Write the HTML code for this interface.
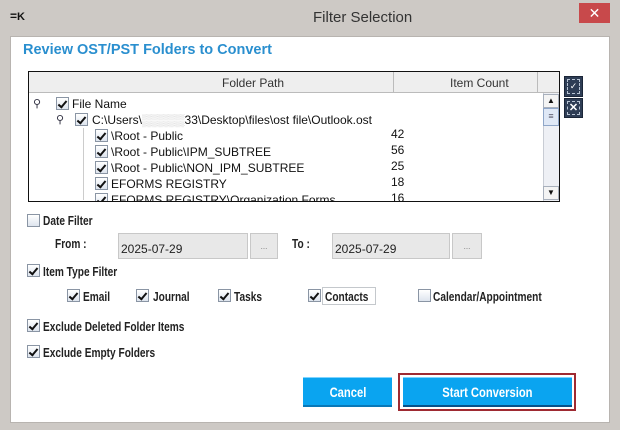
<!DOCTYPE html>
<html><head><style>
*{margin:0;padding:0;box-sizing:border-box}
body{width:620px;height:430px;background:#cdc9c5;font-family:"Liberation Sans",sans-serif;position:relative;overflow:hidden;font-size:12px;color:#111}
.a{position:absolute}
.cb{position:absolute;width:13px;height:13px;border:1px solid #8a95a4;background:linear-gradient(#fff,#dde4ee)}
.cb.c::after{content:"";position:absolute;left:3px;top:1px;width:3px;height:7px;border-right:2px solid #111;border-bottom:2px solid #111;transform:rotate(40deg)}
.t{position:absolute;white-space:nowrap}
.n{font-weight:bold;font-size:13px;color:#222;transform:scaleX(0.78);transform-origin:0 0}
.fld{position:absolute;background:#e8e8e8;border:1px solid #c8c8c8;font-size:12px;padding:8px 0 0 2px;color:#222}
.btn3{position:absolute;background:#e8e8e8;border:1px solid #c8c8c8;font-size:8px;text-align:center;line-height:30px;color:#777}
.bt{position:absolute;background:#0aa4f0;border-top:1px solid #7fd4ff;color:#fff;text-align:center}
.bt span{display:inline-block;font-weight:bold;font-size:14px;transform:scaleX(0.8);line-height:28px}
</style></head><body>
<div class="a" style="left:0;top:0;width:620px;height:37px;background:#cdc9c5"></div>
<div class="t" style="left:10px;top:9px;font-weight:bold;font-size:12px;color:#111">=<span style="font-size:11px">K</span></div>
<div class="t" style="left:313px;top:9px;font-size:15px;color:#333">Filter Selection</div>
<div class="a" style="left:579px;top:3px;width:31px;height:20px;background:#c8494b;color:#fff;text-align:center;font-size:14px;line-height:20px">✕</div>
<div class="a" style="left:10px;top:36px;width:600px;height:387px;background:#fff;border:1px solid #b8b4b0"></div>
<div class="t" style="left:23px;top:42px;font-weight:bold;font-size:14.5px;color:#2a8fcf">Review OST/PST Folders to Convert</div>
<div class="a" style="left:28px;top:71px;width:532px;height:131px;border:1px solid #111;background:#fff;overflow:hidden">
 <div class="a" style="left:0;top:0;width:530px;height:21px;background:#eeeeee;border-bottom:1px solid #bbb"></div>
 <div class="a" style="left:364px;top:0;width:1px;height:21px;background:#bbb"></div>
 <div class="a" style="left:508px;top:0;width:1px;height:21px;background:#bbb"></div>
 <div class="t" style="left:193px;top:4px;color:#333">Folder Path</div>
 <div class="t" style="left:421px;top:4px;color:#333">Item Count</div>
 <div class="a" style="left:514px;top:21px;width:16px;height:108px;background:#eef0f5;border-left:1px solid #c8ccd4"></div>
 <div class="a" style="left:514px;top:22px;width:16px;height:14px;border:1px solid #a8b0bc;background:#f4f4f4;font-size:8px;text-align:center;line-height:12px">▲</div>
 <div class="a" style="left:514px;top:36px;width:16px;height:18px;border:1px solid #8fa6c8;background:#dfe8f6;font-size:9px;text-align:center;line-height:15px;color:#556">≡</div>
 <div class="a" style="left:514px;top:114px;width:16px;height:14px;border:1px solid #a8b0bc;background:#f4f4f4;font-size:8px;text-align:center;line-height:12px">▼</div>
</div>
<div class="t" style="left:33px;top:97px;font-size:11px;color:#334">⚲</div>
<div class="cb c" style="left:56px;top:97px"></div><div class="t" style="left:72px;top:97px">File Name</div>
<div class="t" style="left:56px;top:113px;font-size:11px;color:#334">⚲</div>
<div class="cb c" style="left:75px;top:113px"></div><div class="t" style="left:92px;top:113px">C:\Users\<span style="color:#ccc">▒▒▒▒▒</span>33\Desktop\files\ost file\Outlook.ost</div>
<div class="a" style="left:83px;top:128px;width:1px;height:72px;background:#ccc"></div>
<div class="cb c" style="left:95px;top:129px"></div><div class="t" style="left:111px;top:129px">\Root - Public</div><div class="t" style="left:391px;top:127px">42</div>
<div class="cb c" style="left:95px;top:145px"></div><div class="t" style="left:111px;top:145px">\Root - Public\IPM_SUBTREE</div><div class="t" style="left:391px;top:143px">56</div>
<div class="cb c" style="left:95px;top:161px"></div><div class="t" style="left:111px;top:161px">\Root - Public\NON_IPM_SUBTREE</div><div class="t" style="left:391px;top:159px">25</div>
<div class="cb c" style="left:95px;top:177px"></div><div class="t" style="left:111px;top:177px">EFORMS REGISTRY</div><div class="t" style="left:391px;top:175px">18</div>
<div class="a" style="left:29px;top:193px;width:513px;height:8px;overflow:hidden"><div class="cb c" style="left:66px;top:0"></div><div class="t" style="left:82px;top:0">EFORMS REGISTRY\Organization Forms</div><div class="t" style="left:362px;top:-2px">16</div></div>
<div class="a" style="left:564px;top:76px;width:19px;height:21px;background:#2e3d55;border:1px solid #1b2638"><div style="margin:2px;height:15px;border:1px dashed #b8c4d4;color:#fff;font-size:9px;text-align:center;line-height:13px">✓</div></div>
<div class="a" style="left:564px;top:98px;width:19px;height:20px;background:#2e3d55;border:1px solid #1b2638"><div style="margin:2px;height:14px;border:1px dashed #b8c4d4;color:#fff;font-size:11px;font-weight:bold;text-align:center;line-height:13px">✕</div></div>
<div class="cb" style="left:27px;top:214px"></div><div class="t n" style="left:43px;top:213px">Date Filter</div>
<div class="t n" style="left:55px;top:236px">From :</div>
<div class="fld" style="left:118px;top:233px;width:130px;height:26px">2025-07-29</div>
<div class="btn3" style="left:250px;top:233px;width:28px;height:26px;line-height:26px">...</div>
<div class="t n" style="left:292px;top:236px">To :</div>
<div class="fld" style="left:332px;top:233px;width:118px;height:26px">2025-07-29</div>
<div class="btn3" style="left:452px;top:233px;width:30px;height:26px;line-height:26px">...</div>
<div class="cb c" style="left:27px;top:264px"></div><div class="t n" style="left:43px;top:264px">Item Type Filter</div>
<div class="cb c" style="left:67px;top:289px"></div><div class="t n" style="left:83px;top:289px">Email</div>
<div class="cb c" style="left:136px;top:289px"></div><div class="t n" style="left:153px;top:289px">Journal</div>
<div class="cb c" style="left:218px;top:289px"></div><div class="t n" style="left:234px;top:289px">Tasks</div>
<div class="cb c" style="left:308px;top:289px"></div><div class="a" style="left:322px;top:287px;width:54px;height:18px;border:1px solid #c4c8cc"></div><div class="t n" style="left:325px;top:289px">Contacts</div>
<div class="cb" style="left:418px;top:289px"></div><div class="t n" style="left:433px;top:289px">Calendar/Appointment</div>
<div class="cb c" style="left:27px;top:319px"></div><div class="t n" style="left:43px;top:319px">Exclude Deleted Folder Items</div>
<div class="cb c" style="left:27px;top:345px"></div><div class="t n" style="left:43px;top:345px">Exclude Empty Folders</div>
<div class="bt" style="left:303px;top:377px;width:89px;height:30px;border-bottom:2px solid #0878b8"><span>Cancel</span></div>
<div class="a" style="left:398px;top:373px;width:178px;height:38px;border:2px solid #9e2a32"></div>
<div class="bt" style="left:403px;top:377px;width:169px;height:30px;border-bottom:2px solid #06508a"><span>Start Conversion</span></div>
</body></html>
